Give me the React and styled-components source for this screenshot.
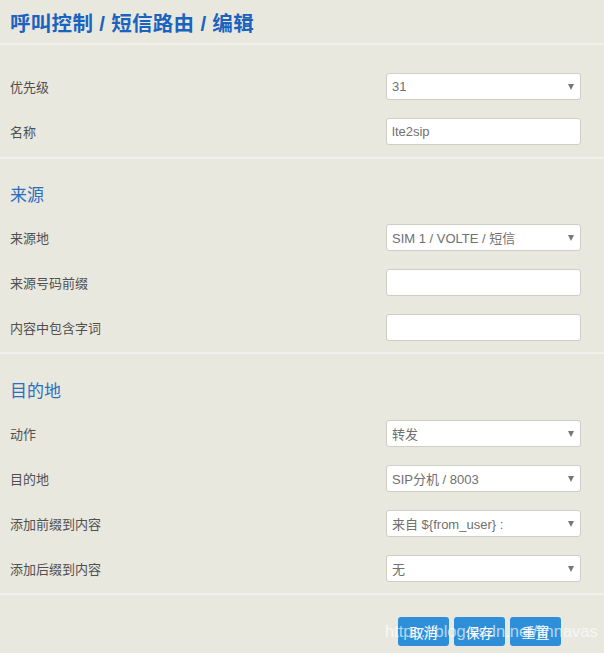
import React from "react";
import styled, { createGlobalStyle } from "styled-components";

const Global = createGlobalStyle`
  html, body { margin: 0; padding: 0; background: #e9e8df; }
  body { font-family: "Liberation Sans", "Noto Sans CJK SC", sans-serif; }
`;

const Page = styled.div`
  position: relative;
  width: 604px;
  height: 653px;
  background: #e9e8df;
  overflow: hidden;
`;

const Header = styled.div`
  height: 43px;
  display: flex;
  align-items: center;
  padding-left: 10px;
  border-bottom: 2px solid #f1f0ea;
`;

const Title = styled.h1`
  margin: 0;
  font-family: "Liberation Sans", "Noto Sans CJK SC", sans-serif;
  font-size: 20.5px;
  font-weight: bold;
  color: #1a63be;
  letter-spacing: 0.3px;
`;

const Section = styled.div`
  padding: ${(p) => p.$pad};
  border-bottom: 2px solid #f1f0ea;
`;

const Heading = styled.div`
  height: 56px;
  box-sizing: border-box;
  padding: ${(p) => p.$top}px 0 0 10px;
  line-height: 22px;
  font-family: "Noto Sans CJK SC", sans-serif;
  font-size: 17px;
  color: #2c6fc0;
`;

const Row = styled.div`
  height: 45px;
  display: grid;
  grid-template-columns: 1fr 195px;
  align-items: center;
  padding: 0 23px 0 10px;
`;

const Label = styled.div`
  font-family: "Noto Sans CJK SC", sans-serif;
  font-size: 13px;
  color: #505050;
`;

const Field = styled.div`
  position: relative;
  height: 27px;
  box-sizing: border-box;
  background: #fff;
  border: 1px solid #cfcdc4;
  border-radius: 3px;
  display: flex;
  align-items: center;
  padding-left: 5px;
  font-family: "Liberation Sans", "Noto Sans CJK SC", sans-serif;
  font-size: 13px;
  color: #707070;
`;

const Arrow = styled.span`
  position: absolute;
  right: 6px;
  top: 50%;
  transform: translateY(-50%);
  width: 0;
  height: 0;
  border-left: 3.5px solid transparent;
  border-right: 3.5px solid transparent;
  border-top: 6px solid #777;
`;

const Actions = styled.div`
  display: flex;
  justify-content: flex-end;
  gap: 5px;
  padding: 22px 43px 0 0;
`;

const Button = styled.button`
  width: 51px;
  height: 29px;
  border: none;
  border-radius: 3px;
  background: #2e8fd8;
  color: #fff;
  font-family: "Noto Sans CJK SC", sans-serif;
  font-size: 14px;
  padding: 0;
`;

const Watermark = styled.div`
  position: absolute;
  left: 385px;
  top: 622px;
  font-family: "Liberation Sans", sans-serif;
  font-size: 16.5px;
  color: rgba(255, 255, 255, 0.65);
  pointer-events: none;
  white-space: nowrap;
`;

const Select = ({ children }) => (
  <Field>
    {children}
    <Arrow />
  </Field>
);

const FormRow = ({ label, children }) => (
  <Row>
    <Label>{label}</Label>
    {children}
  </Row>
);

export default function App() {
  return (
    <Page>
      <Global />
      <Header>
        <Title>呼叫控制 / 短信路由 / 编辑</Title>
      </Header>
      <Section $pad="19px 0 3px">
        <FormRow label="优先级">
          <Select>31</Select>
        </FormRow>
        <FormRow label="名称">
          <Field>lte2sip</Field>
        </FormRow>
      </Section>
      <Section $pad="0 0 2px">
        <Heading $top={24}>来源</Heading>
        <FormRow label="来源地">
          <Select>SIM 1 / VOLTE / 短信</Select>
        </FormRow>
        <FormRow label="来源号码前缀">
          <Field />
        </FormRow>
        <FormRow label="内容中包含字词">
          <Field />
        </FormRow>
      </Section>
      <Section $pad="1px 0 2px">
        <Heading $top={24}>目的地</Heading>
        <FormRow label="动作">
          <Select>转发</Select>
        </FormRow>
        <FormRow label="目的地">
          <Select>SIP分机 / 8003</Select>
        </FormRow>
        <FormRow label="添加前缀到内容">
          <Select>来自 ${"{from_user}"} :</Select>
        </FormRow>
        <FormRow label="添加后缀到内容">
          <Select>无</Select>
        </FormRow>
      </Section>
      <Actions>
        <Button>取消</Button>
        <Button>保存</Button>
        <Button>重置</Button>
      </Actions>
      <Watermark>https://blog.csdn.net/linnavas</Watermark>
    </Page>
  );
}
